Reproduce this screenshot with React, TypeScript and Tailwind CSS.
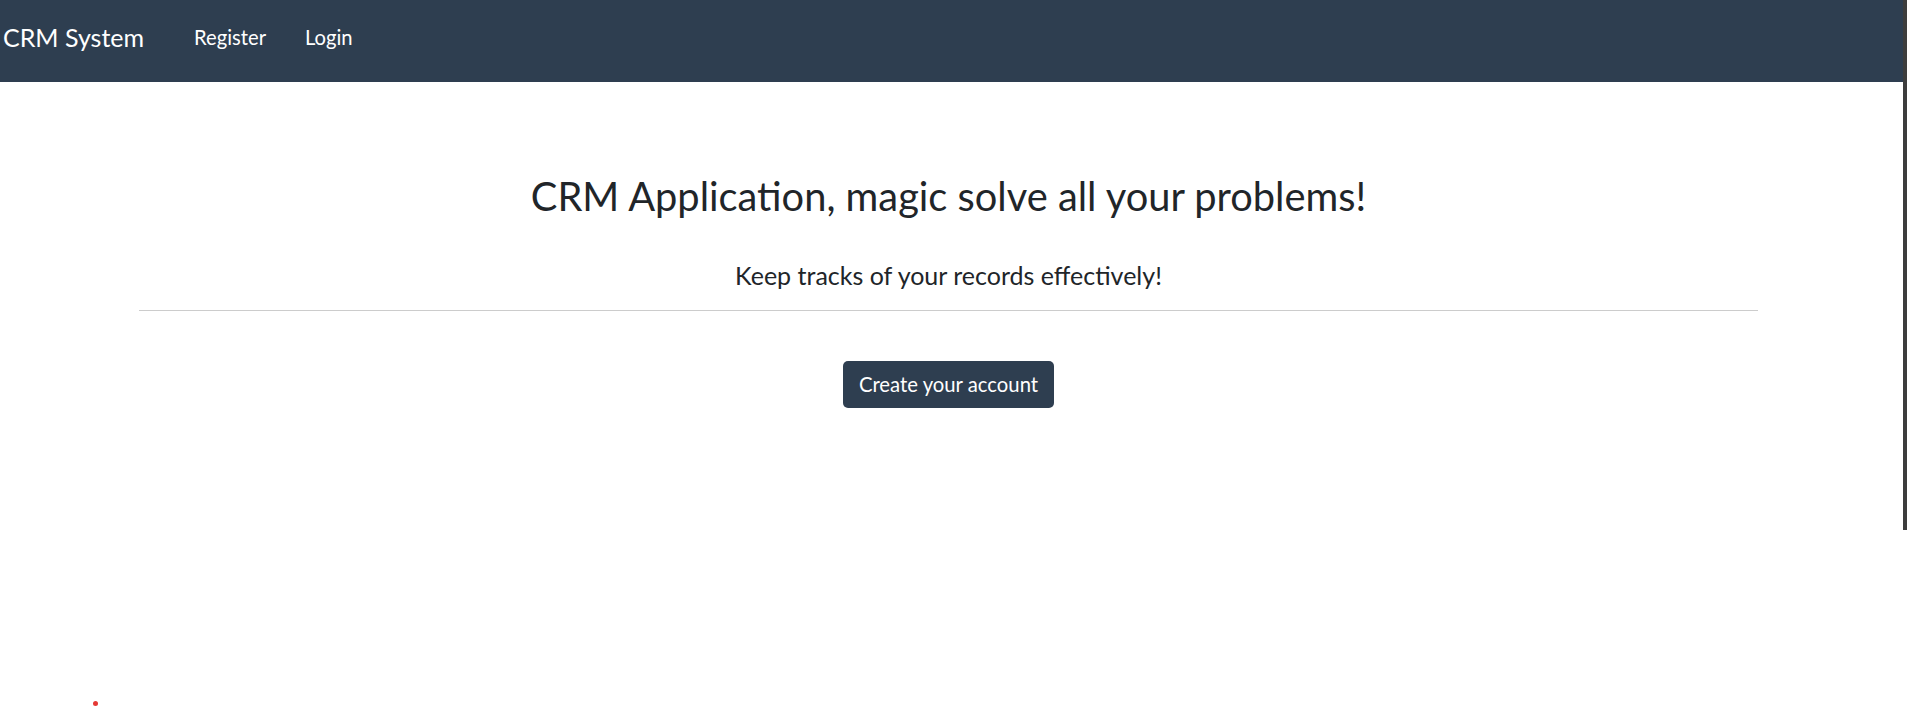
import React from "react";

export default function App() {
  return (
    <div className="relative min-h-[708px] bg-white text-[#212529]" style={{ fontFamily: "Lato, 'Open Sans', sans-serif" }}>
      {/* NAVBAR */}
      <nav className="h-[82px] pb-[8px] bg-[#2e3e50] flex items-center text-white">
        <a className="ml-[3px] text-[25px] leading-[1.2]">CRM System</a>
        <div className="flex items-center ml-[50px] gap-[39px] text-[20.2px] leading-[1.2]">
          <a>Register</a>
          <a>Login</a>
        </div>
      </nav>

      {/* HERO */}
      <main className="w-[1619px] ml-[139px] pt-[90px] flex flex-col items-center">
        <h1 className="text-[39.8px] leading-[1.2] font-normal text-center">
          CRM Application, magic solve all your problems!
        </h1>
        <p className="mt-[40px] text-[25px] leading-[1.2] text-center">
          Keep tracks of your records effectively!
        </p>
        <hr className="w-full mt-[20px] border-0 border-t border-[#cccccc]" />
        <button className="mt-[50px] h-[47px] px-[16px] rounded-[5px] bg-[#2e3e50] text-white text-[20.3px] leading-[1.2]">
          Create your account
        </button>
      </main>

      {/* scrollbar strip and stray dot */}
      <div className="absolute right-0 top-0 w-[4px] h-[530px] bg-[#3d3d3d]" />
      <div className="absolute left-[93px] top-[701px] w-[5px] h-[5px] rounded-full bg-[#e53935]" />
    </div>
  );
}
